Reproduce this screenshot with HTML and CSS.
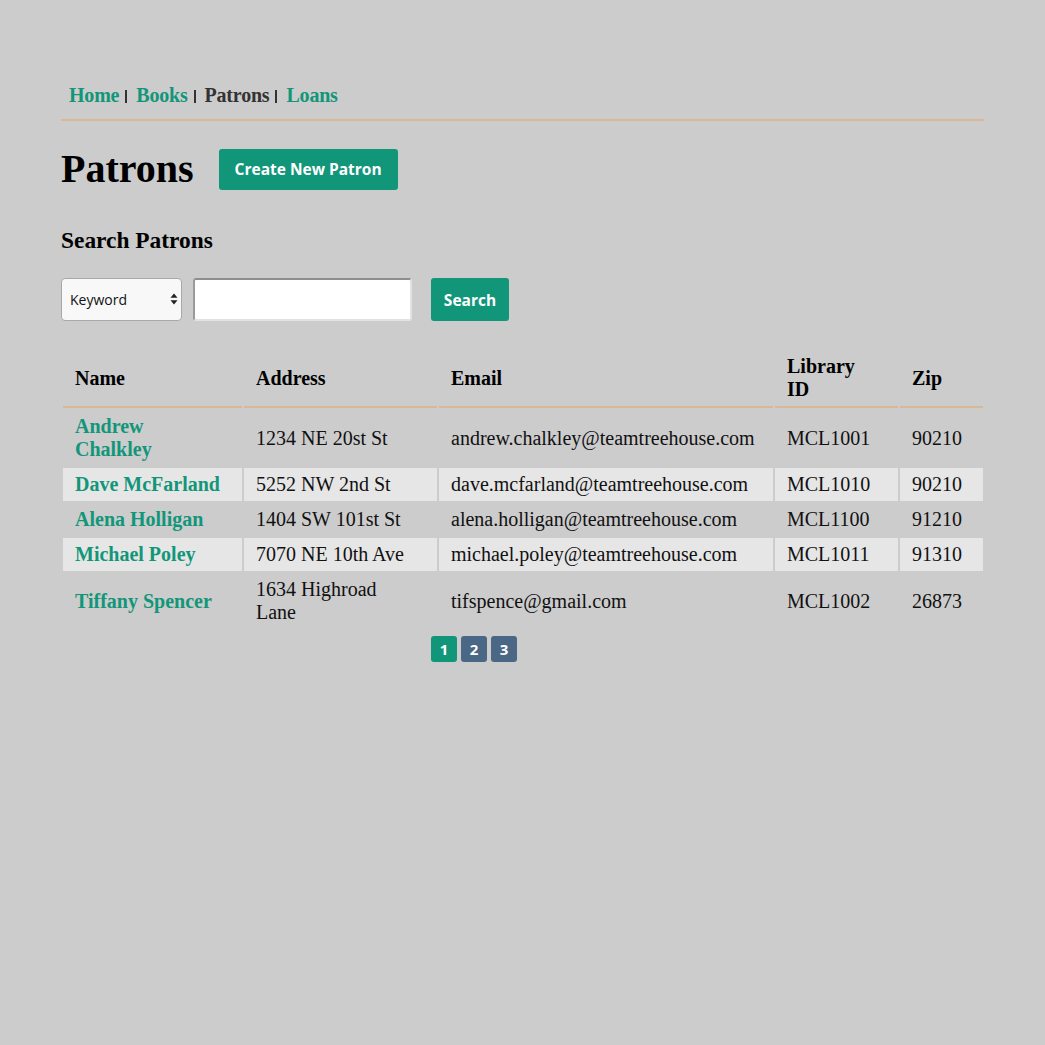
FILE: index.html
```html
<!DOCTYPE html>
<html lang="en">
<head>
<meta charset="utf-8">
<title>Patrons</title>
<link rel="stylesheet" href="styles.css">
</head>
<body>
<div class="page">
  <nav class="nav">
    <a class="nav-link" href="#">Home</a><span class="sep"></span>
    <a class="nav-link" href="#">Books</a><span class="sep"></span>
    <span class="nav-current">Patrons</span><span class="sep"></span>
    <a class="nav-link" href="#">Loans</a>
  </nav>

  <div class="title-row">
    <h1 class="title">Patrons</h1>
    <a class="btn btn-create" href="#">Create New Patron</a>
  </div>

  <h3 class="subtitle">Search Patrons</h3>

  <form class="search">
    <div class="select-wrap">
      <select class="select"><option>Keyword</option></select>
      <svg class="select-arrows" width="8" height="12" viewBox="0 0 8 12"><path d="M4 0.5 L7.5 4.8 L0.5 4.8 Z M4 11.5 L7.5 7.2 L0.5 7.2 Z" fill="#222"/></svg>
    </div>
    <input class="input" type="text">
    <button class="btn btn-search" type="button">Search</button>
  </form>

  <table class="table">
    <thead>
      <tr>
        <th class="c-name">Name</th>
        <th class="c-addr">Address</th>
        <th class="c-email">Email</th>
        <th class="c-lib">Library ID</th>
        <th class="c-zip">Zip</th>
      </tr>
    </thead>
    <tbody>
      <tr>
        <td><a class="name-link" href="#">Andrew Chalkley</a></td>
        <td>1234 NE 20st St</td>
        <td>andrew.chalkley@teamtreehouse.com</td>
        <td>MCL1001</td>
        <td>90210</td>
      </tr>
      <tr class="stripe">
        <td><a class="name-link" href="#">Dave McFarland</a></td>
        <td>5252 NW 2nd St</td>
        <td>dave.mcfarland@teamtreehouse.com</td>
        <td>MCL1010</td>
        <td>90210</td>
      </tr>
      <tr>
        <td><a class="name-link" href="#">Alena Holligan</a></td>
        <td>1404 SW 101st St</td>
        <td>alena.holligan@teamtreehouse.com</td>
        <td>MCL1100</td>
        <td>91210</td>
      </tr>
      <tr class="stripe">
        <td><a class="name-link" href="#">Michael Poley</a></td>
        <td>7070 NE 10th Ave</td>
        <td>michael.poley@teamtreehouse.com</td>
        <td>MCL1011</td>
        <td>91310</td>
      </tr>
      <tr>
        <td><a class="name-link" href="#">Tiffany Spencer</a></td>
        <td>1634 Highroad Lane</td>
        <td>tifspence@gmail.com</td>
        <td>MCL1002</td>
        <td>26873</td>
      </tr>
    </tbody>
  </table>

  <div class="pager">
    <a class="page-btn active" href="#">1</a>
    <a class="page-btn" href="#">2</a>
    <a class="page-btn" href="#">3</a>
  </div>
</div>
</body>
</html>
```

FILE: styles.css
```css
* { box-sizing: border-box; }

html, body {
  margin: 0;
  background: #cccccc;
}

body {
  font-family: "Liberation Serif", "Times New Roman", serif;
  font-size: 20px;
  line-height: 23px;
  color: #111;
}

.page {
  width: 923px;
  margin: 0 auto;
  padding-top: 84px;
}

.nav {
  display: flex;
  align-items: center;
  padding: 0 0 12px 8px;
  border-bottom: 2px solid #dab797;
  font-weight: bold;
  letter-spacing: -0.2px;
}

.nav-link {
  color: #12967a;
  text-decoration: none;
}

.nav-current {
  color: #333;
}

.sep {
  display: inline-block;
  width: 2px;
  height: 13px;
  background: #333;
  margin: 2px 9px 0 6px;
}

.title-row {
  display: flex;
  align-items: center;
  margin-top: 25px;
  height: 46px;
}

.title {
  margin: 0;
  font-size: 40px;
  line-height: 46px;
  font-weight: bold;
  color: #000;
}

.btn {
  display: inline-block;
  background: #12967a;
  color: #fff;
  font-family: "Open Sans", "Noto Sans", sans-serif;
  font-weight: bold;
  font-size: 15.5px;
  border: none;
  border-radius: 3px;
  text-decoration: none;
}

.btn-create {
  margin-left: 25px;
  height: 41px;
  line-height: 41px;
  padding: 0 16px;
}

.subtitle {
  margin: 35px 0 0;
  font-size: 23.4px;
  line-height: 27px;
  font-weight: bold;
  color: #000;
}

.search {
  display: flex;
  align-items: center;
  margin-top: 24px;
  height: 43px;
}

.select-wrap {
  position: relative;
  width: 121px;
  height: 43px;
}

.select {
  appearance: none;
  -webkit-appearance: none;
  width: 121px;
  height: 43px;
  background: #f8f8f8;
  border: 1px solid #a8a8a8;
  border-radius: 4px;
  padding: 0 0 0 8px;
  font-family: "Open Sans", "Noto Sans", sans-serif;
  font-size: 14px;
  color: #111;
}

.select-arrows {
  position: absolute;
  right: 4px;
  top: 15px;
}

.input {
  margin-left: 11px;
  width: 219px;
  height: 43px;
  background: #fff;
  border-style: solid;
  border-width: 2px;
  border-color: #8e8e8e #e2e2e2 #e2e2e2 #9a9a9a;
  border-radius: 3px;
}

.btn-search {
  margin-left: 19px;
  height: 43px;
  width: 78px;
  padding: 0;
  font-size: 15.5px;
  text-align: center;
}

.table {
  width: 100%;
  margin-top: 27px;
  border-spacing: 2px;
  border-collapse: separate;
  table-layout: fixed;
}

.table th,
.table td {
  text-align: left;
  padding: 5px 12px;
  vertical-align: middle;
}

.table th:nth-child(1),
.table td:nth-child(1),
.table th:nth-child(2),
.table td:nth-child(2),
.table th:nth-child(4),
.table td:nth-child(4) {
  padding-right: 22px;
}

.table th:nth-child(3),
.table td:nth-child(3) {
  padding-right: 4px;
}

.table th:nth-child(5),
.table td:nth-child(5) {
  padding-right: 4px;
}

.table th {
  font-weight: bold;
  color: #000;
  border-bottom: 2px solid #dab797;
}

.c-name { width: 179px; }
.c-addr { width: 193px; }
.c-email { width: 334px; }
.c-lib { width: 123px; }
.c-zip { width: 83px; }

.stripe td {
  background: #e6e6e6;
}

.name-link {
  color: #12967a;
  font-weight: bold;
  text-decoration: none;
}

.pager {
  display: flex;
  gap: 4px;
  margin-top: 5px;
  padding-left: 370px;
}

.page-btn {
  display: inline-block;
  width: 26px;
  height: 26px;
  line-height: 26px;
  text-align: center;
  background: #4a6785;
  color: #fff;
  border-radius: 3px;
  font-family: "Open Sans", "Noto Sans", sans-serif;
  font-weight: bold;
  font-size: 15px;
  text-decoration: none;
}

.page-btn.active {
  background: #12967a;
}
```
